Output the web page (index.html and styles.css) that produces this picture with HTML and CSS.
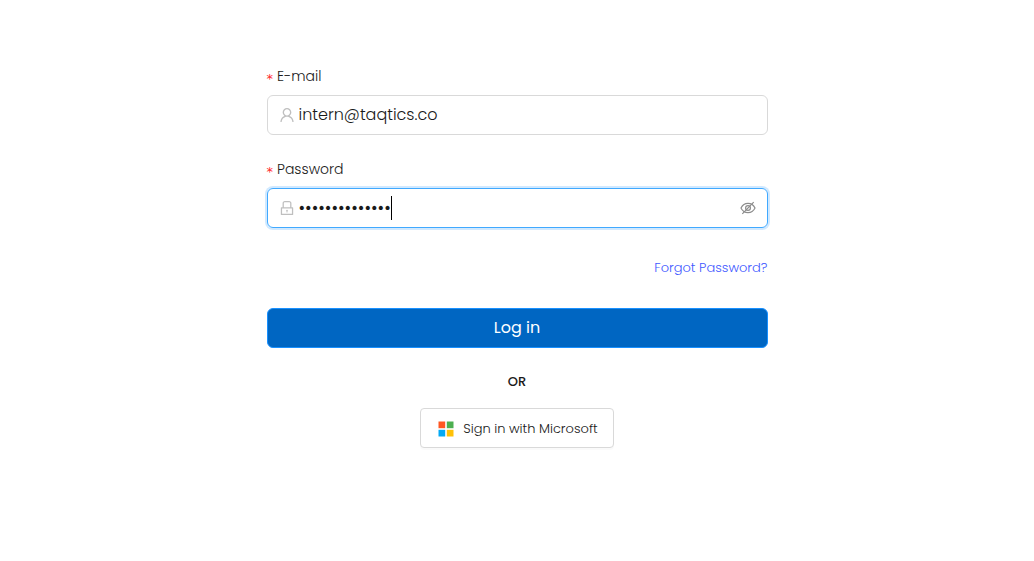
FILE: index.html
```html
<!DOCTYPE html>
<html lang="en">
<head>
<meta charset="utf-8">
<meta name="viewport" content="width=device-width, initial-scale=1">
<title>Log in</title>
<link rel="stylesheet" href="styles.css">
</head>
<body>
<main class="page">
  <form class="login">
    <div class="field">
      <label class="field-label" for="email"><span class="required">*</span>E-mail</label>
      <div class="control">
        <svg class="icon" viewBox="0 0 1024 1024" aria-hidden="true"><path d="M858.5 763.6a374 374 0 00-80.6-119.5 375.63 375.63 0 00-119.5-80.6c-.4-.2-.8-.3-1.2-.5C719.5 518 760 444.7 760 362c0-137-111-248-248-248S264 225 264 362c0 82.7 40.5 156 102.8 201.1-.4.2-.8.3-1.2.5-44.8 18.9-85 46-119.5 80.6a375.63 375.63 0 00-80.6 119.5A371.7 371.7 0 00136 901.8a8 8 0 008 8.2h60c4.4 0 7.9-3.5 8-7.8 2-77.2 33-149.5 87.8-204.3 56.7-56.7 132-87.9 212.2-87.9s155.5 31.2 212.2 87.9C779 752.7 810 825 812 902.2c.1 4.4 3.6 7.8 8 7.8h60a8 8 0 008-8.2c-1-47.8-10.9-94.3-29.5-138.2zM512 534c-45.9 0-89.1-17.9-121.6-50.4S340 407.9 340 362c0-45.9 17.9-89.1 50.4-121.6S466.1 190 512 190s89.1 17.9 121.6 50.4S684 316.1 684 362c0 45.9-17.9 89.1-50.4 121.6S557.9 534 512 534z"/></svg>
        <input class="input" id="email" type="email" value="intern@taqtics.co">
      </div>
    </div>
    <div class="field">
      <label class="field-label" for="password"><span class="required">*</span>Password</label>
      <div class="control control-focused">
        <svg class="icon" viewBox="0 0 1024 1024" aria-hidden="true"><path d="M832 464h-68V240c0-70.7-57.3-128-128-128H388c-70.7 0-128 57.3-128 128v224h-68c-17.7 0-32 14.3-32 32v384c0 17.7 14.3 32 32 32h640c17.7 0 32-14.3 32-32V496c0-17.7-14.3-32-32-32zM332 240c0-30.9 25.1-56 56-56h248c30.9 0 56 25.1 56 56v224H332V240zm460 600H232V536h560v304zM484 701v53c0 4.4 3.6 8 8 8h40c4.4 0 8-3.6 8-8v-53a48.01 48.01 0 10-56 0z"/></svg>
        <input class="input input-password" id="password" type="password" value="internpassword">
        <span class="caret"></span>
        <button class="reveal" type="button" aria-label="Show password">
          <svg class="icon-eye" viewBox="0 0 16 16" aria-hidden="true"><path d="M1 8C4 1.800 12 1.800 15 8C12 14.200 4 14.200 1 8Z"/><circle cx="8" cy="8" r="2.400"/><path d="M2.300 13.900L13.700 2.100"/></svg>
        </button>
      </div>
    </div>
    <a class="forgot" href="#forgot">Forgot Password?</a>
    <button class="submit" type="submit">Log in</button>
    <p class="divider">OR</p>
    <button class="microsoft" type="button">
      <svg class="logo" viewBox="0 0 16 16" aria-hidden="true"><path fill="#ff5722" d="M.5.5h6.700v6.700H.5z"/><path fill="#4caf50" d="M8.800.5h6.700v6.700H8.800z"/><path fill="#03a9f4" d="M.5 8.800h6.700v6.700H.5z"/><path fill="#ffc107" d="M8.800 8.800h6.700v6.700H8.800z"/></svg>
      Sign in with Microsoft
    </button>
  </form>
</main>
</body>
</html>
```

FILE: styles.css
```css
*, *::before, *::after { box-sizing: border-box; }
body {
  margin: 0;
  background: #fff;
  color: #1a1a1a;
  font: 300 14px/22px Poppins, Inter, "Open Sans", sans-serif;
}
button, input { font: inherit; color: inherit; }
.page { padding: 65px 24px 48px; }
.login {
  display: flex;
  flex-direction: column;
  max-width: 501px;
  margin: 0 auto;
}
.field { margin-bottom: 23px; }
.field-label {
  display: flex;
  gap: 4px;
  margin-bottom: 8px;
}
.required {
  height: 22px;
  color: #ff2a2e;
  font-family: "DejaVu Sans", sans-serif;
  font-size: 13px;
  font-weight: 400;
  line-height: 28px;
}
.control {
  display: flex;
  align-items: center;
  height: 40px;
  padding: 0 11px 0 10px;
  border: 1px solid #d9d9d9;
  border-radius: 6px;
}
.control-focused {
  border-color: #40a9ff;
  box-shadow: 0 0 0 2px rgba(24, 144, 255, .2);
}
.icon {
  flex: none;
  width: 18px;
  height: 18px;
  margin-right: 3px;
  fill: #bfbfbf;
}
.input {
  flex: 1;
  min-width: 0;
  padding: 0;
  border: 0;
  outline: 0;
  background: none;
  font-size: 16px;
  line-height: 24px;
}
.input-password {
  flex: none;
  field-sizing: content;
  font-size: 18px;
}
.caret {
  width: 1px;
  height: 24px;
  background: #000;
}
.reveal {
  display: flex;
  margin-left: auto;
  padding: 0;
  border: 0;
  background: none;
}
.icon-eye {
  width: 16px;
  height: 16px;
  fill: none;
  stroke: #8c8c8c;
  stroke-width: 1.2;
}
.forgot {
  align-self: flex-end;
  margin: 6px 0 29px;
  color: #3f5aff;
  font-size: 13px;
  text-decoration: none;
}
.submit {
  height: 40px;
  border: 1px solid #1890ff;
  border-radius: 6px;
  background: #0066c2;
  color: #fff;
  font-size: 16px;
  font-weight: 400;
}
.divider {
  margin: 23px 0 15px;
  font-size: 13px;
  font-weight: 500;
  text-align: center;
}
.microsoft {
  display: flex;
  align-items: center;
  align-self: center;
  gap: 9px;
  height: 40px;
  padding: 2px 15px 0 17px;
  border: 1px solid #d9d9d9;
  border-radius: 4px;
  background: #fff;
  box-shadow: 0 2px 0 rgba(0, 0, 0, .02);
  font-size: 13px;
}
.logo { width: 16px; height: 16px; }
```
